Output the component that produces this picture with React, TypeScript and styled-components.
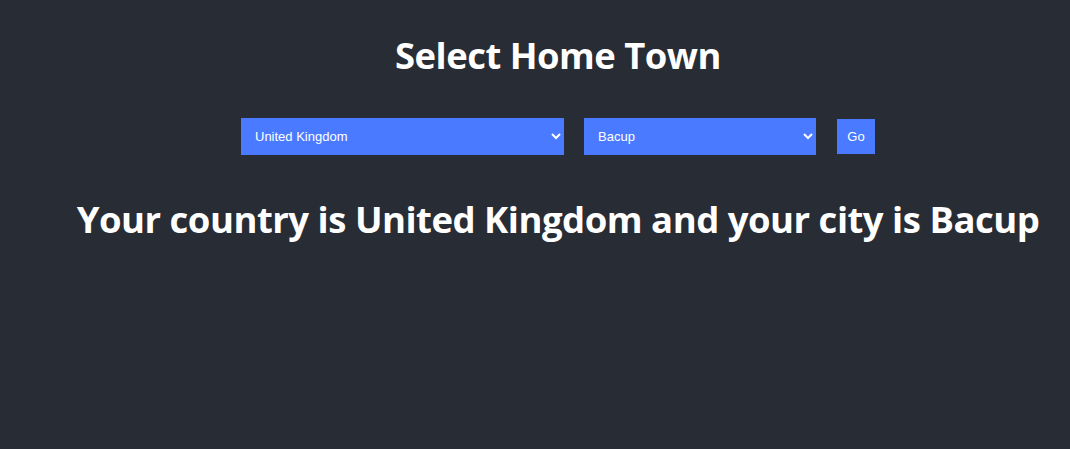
import React, { useState } from "react";
import styled, { createGlobalStyle } from "styled-components";

const Global = createGlobalStyle`
  html, body { margin: 0; padding: 0; background: #282c34; }
  body { font-family: "Open Sans", "Noto Sans", sans-serif; color: #fff; }
`;

const Page = styled.div`
  min-height: 449px;
  background: #282c34;
  display: flex;
  flex-direction: column;
  align-items: center;
  padding-left: 46px;
  box-sizing: border-box;
`;

const Title = styled.h1`
  margin: 31px 0 0;
  font-size: 36.4px;
  font-weight: 700;
  line-height: 48px;
  letter-spacing: -0.5px;
`;

const Controls = styled.div`
  display: flex;
  align-items: center;
  margin-top: 39px;
`;

const Select = styled.select<{ $w: number }>`
  width: ${(p) => p.$w}px;
  height: 37px;
  background: #4a7aff;
  color: #fff;
  border: none;
  padding: 0 8px 0 10px;
  font-family: "Liberation Sans", Arial, sans-serif;
  font-size: 13px;
  margin-right: 20px;
  outline: none;
`;

const GoButton = styled.button`
  height: 35px;
  width: 38px;
  margin-left: 1px;
  background: #4a7aff;
  color: #fff;
  border: none;
  font-family: "Liberation Sans", Arial, sans-serif;
  font-size: 13px;
  padding: 0;
`;

const Result = styled.h2`
  margin: 40px 0 0;
  font-size: 36.5px;
  font-weight: 700;
  line-height: 48px;
  letter-spacing: -0.5px;
`;

export default function App() {
  const [country, setCountry] = useState("United Kingdom");
  const [city, setCity] = useState("Bacup");
  return (
    <>
      <Global />
      <Page>
        <Title>Select Home Town</Title>
        <Controls>
          <Select $w={323} value={country} onChange={(e) => setCountry(e.target.value)}>
            <option>United Kingdom</option>
            <option>United States</option>
          </Select>
          <Select $w={232} value={city} onChange={(e) => setCity(e.target.value)}>
            <option>Bacup</option>
            <option>London</option>
          </Select>
          <GoButton>Go</GoButton>
        </Controls>
        <Result>
          Your country is {country} and your city is {city}
        </Result>
      </Page>
    </>
  );
}
